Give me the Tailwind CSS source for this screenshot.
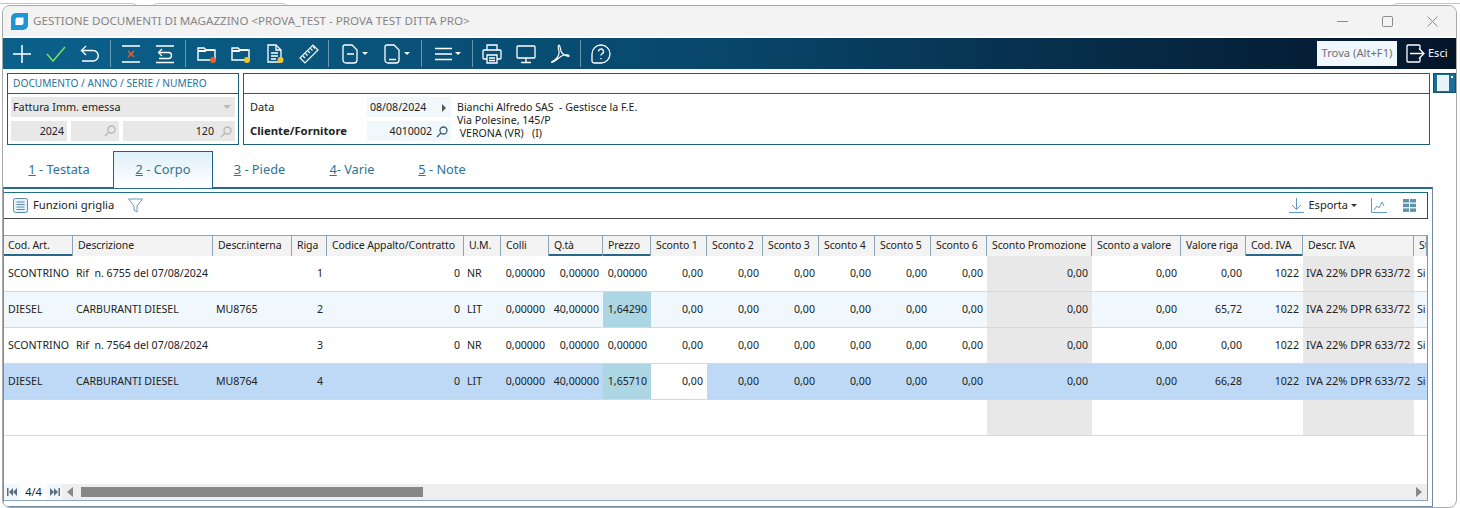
<!doctype html>
<html lang="it">
<head>
<meta charset="utf-8">
<title>Gestione documenti di magazzino</title>
<script src="https://cdn.jsdelivr.net/npm/@tailwindcss/browser@4"></script>
</head>
<body class="bg-white overflow-hidden font-['Noto_Sans','DejaVu_Sans',sans-serif] text-[10.6px] text-[#222]">
<div class="relative w-[1460px] h-[508px] overflow-hidden pt-[5px] pl-[2px]">
<div class="absolute left-0 top-[3px] w-[138px] h-[10px] border-t border-r border-[#c4c4c4] rounded-tr-md"></div>
<div class="absolute left-[152px] top-[3px] w-[136px] h-[10px] border-t border-x border-[#c4c4c4] rounded-t-md"></div>
<div class="absolute left-[1392px] top-[3px] w-[68px] h-[10px] border-t border-l border-[#c4c4c4] rounded-tl-md"></div>
<div class="relative w-[1455px] h-[503px] border border-[#a8a8a8] rounded-t-lg rounded-b-lg bg-white overflow-hidden">
  <!-- title bar -->
  <div class="h-[30px] bg-[#f3f3f3] flex items-center pl-[8px]">
    <svg width="17" height="17" viewBox="0 0 17 17" class="mr-[5px]"><path d="M5 0h12v12a5 5 0 0 1-5 5H0V5a5 5 0 0 1 5-5z" fill="#1d96d3"/><path d="M6.500 4.500h6v5.500a2 2 0 0 1-2 2h-6V6.500a2 2 0 0 1 2-2z" fill="#fff"/></svg>
    <span class="text-[11.6px] text-[#858585] whitespace-nowrap">GESTIONE DOCUMENTI DI MAGAZZINO &lt;PROVA_TEST - PROVA TEST DITTA PRO&gt;</span>
    <div class="ml-auto flex items-center">
      <svg width="11" height="11" viewBox="0 0 11 11" class="mr-[34px]"><path d="M0 5.500h11" stroke="#8a8a8a"/></svg>
      <svg width="11" height="11" viewBox="0 0 11 11" class="mr-[34px]"><rect x=".5" y=".5" width="10" height="10" rx="1" fill="none" stroke="#8a8a8a"/></svg>
      <svg width="11" height="11" viewBox="0 0 11 11" class="mr-[18px]"><path d="M.5.500l10 10M10.500.500l-10 10" stroke="#8a8a8a"/></svg>
    </div>
  </div>
  <!-- toolbar -->
  <div class="mt-[2px] h-[31px] bg-gradient-to-r from-[#0b618b] via-[#08466a] to-[#04152a] flex items-center pl-[2px] text-white">
    <div class="w-[34px] flex justify-center"><svg width="20" height="20" viewBox="0 0 20 20"><path d="M10 1v18M1 10h18" stroke="#fff" stroke-width="1.500"/></svg></div>
    <div class="w-[34px] flex justify-center"><svg width="20" height="20" viewBox="0 0 20 20"><path d="M1 10l6 7L19 3" stroke="#7ed957" stroke-width="1.600" fill="none"/></svg></div>
    <div class="w-[34px] flex justify-center"><svg width="20" height="20" viewBox="0 0 20 20" fill="none" stroke="#fff" stroke-width="1.400"><path d="M6 2L1.500 6.500 6 11"/><path d="M2 6.500h11a5 5 0 0 1 0 10.500H2"/></svg></div>
    <div class="w-px h-[27px] bg-white/40 mx-[3px]"></div>
    <div class="w-[34px] flex justify-center"><svg width="20" height="20" viewBox="0 0 20 20"><path d="M1 2h18M1 18h18" stroke="#fff" stroke-width="1.300"/><path d="M7 7l6 6M13 7l-6 6" stroke="#e8622a" stroke-width="1.500"/></svg></div>
    <div class="w-[34px] flex justify-center"><svg width="20" height="20" viewBox="0 0 20 20" fill="none" stroke="#fff" stroke-width="1.300"><path d="M1 2h18M1 18.500h18"/><path d="M7 5L3.500 8.500 7 12"/><path d="M4 8.500h9.500a3 3 0 0 1 0 6H4"/></svg></div>
    <div class="w-px h-[27px] bg-white/40 mx-[3px]"></div>
    <div class="w-[34px] flex justify-center ml-[1px]"><svg width="20" height="20" viewBox="0 0 20 20"><path d="M1 4h6l2 2h9v10H1z" fill="none" stroke="#fff" stroke-width="1.400"/><path d="M1 7h7l1.500-1H17" stroke="#fff" stroke-width="2" fill="none"/><circle cx="16" cy="16" r="3" fill="#e8622a"/></svg></div>
    <div class="w-[34px] flex justify-center"><svg width="20" height="20" viewBox="0 0 20 20"><path d="M1 4h6l2 2h9v10H1z" fill="none" stroke="#fff" stroke-width="1.400"/><path d="M1 7h7l1.500-1H17" stroke="#fff" stroke-width="2" fill="none"/><circle cx="16" cy="16" r="3" fill="#f4c430"/></svg></div>
    <div class="w-[34px] flex justify-center"><svg width="20" height="20" viewBox="0 0 20 20" fill="none" stroke="#fff" stroke-width="1.300"><path d="M3 1h8l5 5v12H3z"/><path d="M11 1v5h5M6 9h7M6 12h7M6 15h5"/><circle cx="15.500" cy="16" r="3" fill="#f4c430" stroke="none"/></svg></div>
    <div class="w-[34px] flex justify-center"><svg width="20" height="20" viewBox="0 0 20 20" fill="none" stroke="#fff" stroke-width="1.200"><path d="M1 14L14 1l5 5L6 19z"/><path d="M4 12l2 2M6.500 9.500l2 2M9 7l2 2M11.500 4.500l2 2M14 2.500l2 2"/></svg></div>
    <div class="w-px h-[27px] bg-white/40 ml-[2px] mr-[3px]"></div>
    <div class="w-[26px] flex items-center ml-[10px] gap-[3px]"><svg width="17" height="20" viewBox="0 0 17 20" fill="none" stroke="#fff" stroke-width="1.300"><path d="M3 1h7l5 5v10a3 3 0 0 1-3 3H4a3 3 0 0 1-3-3V3a2 2 0 0 1 2-2z"/><path d="M5 10h7"/></svg><span class="w-0 h-0 border-x-[3px] border-x-transparent border-t-[3px] border-t-white"></span></div>
    <div class="w-[26px] flex items-center ml-[16px] gap-[3px]"><svg width="17" height="20" viewBox="0 0 17 20" fill="none" stroke="#fff" stroke-width="1.300"><path d="M3 1h7l5 5v10a3 3 0 0 1-3 3H4a3 3 0 0 1-3-3V3a2 2 0 0 1 2-2z"/><path d="M5 15.500h7"/></svg><span class="w-0 h-0 border-x-[3px] border-x-transparent border-t-[3px] border-t-white"></span></div>
    <div class="w-px h-[27px] bg-white/40 ml-[11px]"></div>
    <div class="w-[26px] flex items-center ml-[13px] gap-[3px]"><svg width="17" height="14" viewBox="0 0 17 14" stroke="#fff" stroke-width="1.300"><path d="M0 1.500h17M0 7h17M0 12.500h17"/></svg><span class="w-0 h-0 border-x-[3px] border-x-transparent border-t-[3px] border-t-white"></span></div>
    <div class="w-px h-[27px] bg-white/40 ml-[11px]"></div>
    <div class="w-[34px] flex justify-center ml-[2px]"><svg width="20" height="20" viewBox="0 0 20 20" fill="none" stroke="#fff" stroke-width="1.300"><path d="M5 6V1h10v5"/><path d="M5 15H2a1 1 0 0 1-1-1V7a1 1 0 0 1 1-1h16a1 1 0 0 1 1 1v7a1 1 0 0 1-1 1h-3"/><path d="M5 11h10v8H5zM7 14h6M7 16.500h6"/></svg></div>
    <div class="w-[34px] flex justify-center"><svg width="20" height="20" viewBox="0 0 20 20" fill="none" stroke="#fff" stroke-width="1.300"><rect x="1" y="2" width="18" height="12" rx="1"/><path d="M10 14v4M5 18.500h10"/></svg></div>
    <div class="w-[34px] flex justify-center"><svg width="20" height="20" viewBox="0 0 20 20" fill="none" stroke="#fff" stroke-width="1.200"><path d="M9 1c-1 0-1 3 0 6 1 4-3 9-6 10-2 1-2 2 0 1 3-1 7-6 11-7 2-.500 5 0 5 1s-4 0-7-3C10 7 10.500 1 9 1z"/></svg></div>
    <div class="w-px h-[27px] bg-white/40 ml-[3px]"></div>
    <div class="w-[34px] flex justify-center ml-[3px]"><svg width="20" height="20" viewBox="0 0 20 20" fill="none" stroke="#fff" stroke-width="1.300"><path d="M1 10a9 9 0 1 1 9 9H3a2 2 0 0 1-2-2z"/><path d="M7.500 7.500a2.500 2.500 0 1 1 3.500 2.300c-.7.4-1 .8-1 1.700"/><path d="M10 14v1.200"/></svg></div>
    <div class="ml-auto w-[80px] h-[25px] bg-[#f0f8fd] text-[#6f6f7a] text-[11.2px] flex items-center justify-center whitespace-nowrap">Trova (Alt+F1)</div>
    <svg width="19" height="19" viewBox="0 0 19 19" fill="none" stroke="#fff" stroke-width="1.300" class="ml-[9px]"><path d="M14 5V2a1 1 0 0 0-1-1H2a1 1 0 0 0-1 1v15a1 1 0 0 0 1 1h11a1 1 0 0 0 1-1v-3"/><path d="M4 9.500h14M13 4.500l5 5-5 5"/></svg>
    <span class="ml-[3px] mr-[7px] w-[21px] text-[11px]">Esci</span>
  </div>
  <!-- document header -->
  <div class="flex mt-[4px] pl-[4px] h-[72px]">
    <div class="w-[232px] border border-[#1b6078] flex flex-col">
      <div class="h-[20px] border-b border-[#1b6078] text-[#26739b] text-[10.2px] pl-[5px] flex items-center whitespace-nowrap">DOCUMENTO / ANNO / SERIE / NUMERO</div>
      <div class="mx-[3px] mt-[3px] h-[20px] bg-[#e8e8e8] flex items-center pl-[2px] pr-[4px] justify-between"><span class="text-[10.8px]">Fattura Imm. emessa</span><span class="w-0 h-0 border-x-[4px] border-x-transparent border-t-[4px] border-t-[#bbb]"></span></div>
      <div class="mx-[3px] mt-[4px] flex gap-[4px] h-[20px]">
        <div class="w-[56px] bg-[#e8e8e8] flex items-center justify-end pr-[3px] pt-[1px]">2024</div>
        <div class="w-[48px] bg-[#e8e8e8] flex items-center justify-end pr-[3px]"><svg width="12" height="12" viewBox="0 0 12 12" fill="none" stroke="#b5b5b5" stroke-width="1.300"><circle cx="7.500" cy="4.500" r="3.500"/><path d="M5 7l-4 4"/></svg></div>
        <div class="w-[112px] bg-[#e8e8e8] flex items-center justify-end pr-[3px] gap-[6px] pt-[1px]"><span>120</span><svg width="12" height="12" viewBox="0 0 12 12" fill="none" stroke="#b5b5b5" stroke-width="1.300"><circle cx="7.500" cy="4.500" r="3.500"/><path d="M5 7l-4 4"/></svg></div>
      </div>
    </div>
    <div class="ml-[4px] w-[1187px] border border-[#1b6078] flex flex-col">
      <div class="h-[20px] border-b border-[#1b6078]"></div>
      <div class="flex pl-[6px] pt-[3px]">
        <div class="w-[117px] flex flex-col">
          <div class="h-[20px] flex items-center text-[11px] pt-[1px]">Data</div>
          <div class="h-[20px] mt-[4px] flex items-center font-bold text-[11.3px] pt-[1px]">Cliente/Fornitore</div>
        </div>
        <div class="w-[84px] flex flex-col">
          <div class="h-[20px] bg-[#f0f8fc] flex items-center pl-[3px] pr-[5px] justify-between pt-[1px]"><span>08/08/2024</span><span class="w-0 h-0 border-y-[4px] border-y-transparent border-l-[4px] border-l-[#555]"></span></div>
          <div class="h-[20px] mt-[4px] bg-[#f0f8fc] flex items-center justify-end pr-[3px] gap-[4px] pt-[1px]"><span>4010002</span><svg width="12" height="12" viewBox="0 0 12 12" fill="none" stroke="#3a5f78" stroke-width="1.300"><circle cx="7.500" cy="4.500" r="3.500"/><path d="M5 7l-4 4"/></svg></div>
        </div>
        <div class="ml-[6px] leading-[13px] pt-[4px] whitespace-pre"><div>Bianchi Alfredo SAS  - Gestisce la F.E.</div><div>Via Polesine, 145/P</div><div> VERONA (VR)   (I)</div></div>
      </div>
    </div>
    <div class="ml-[3px] w-[23px] h-[20px] bg-[#1b6f96] border border-[#12506e] flex items-center pl-[3px] gap-[2px]"><div class="w-[12px] h-[16px] bg-[#e8f3f9]"></div><div class="w-[2px] h-[2px] bg-white self-start mt-[2px]"></div></div>
  </div>
  <!-- tabs -->
  <div class="flex mt-[6px] h-[37px] items-stretch text-[12.8px] text-[#2f7396] pl-[2px] relative z-10">
    <div class="w-[108px] flex items-center justify-center pt-[1px] whitespace-nowrap"><span><u>1</u> - Testata</span></div>
    <div class="w-[100px] bg-gradient-to-b from-[#dff0f9] to-white border border-b-0 border-[#1b6485] flex items-center justify-center pb-[1px] whitespace-nowrap"><span><u>2</u> - Corpo</span></div>
    <div class="w-[93px] flex items-center justify-center pt-[1px] whitespace-nowrap"><span><u>3</u> - Piede</span></div>
    <div class="w-[92px] flex items-center justify-center pt-[1px] whitespace-nowrap"><span><u>4</u>- Varie</span></div>
    <div class="w-[88px] flex items-center justify-center pt-[1px] whitespace-nowrap"><span><u>5</u> - Note</span></div>
  </div>
  <!-- body panel -->
  <div class="w-[1430px] h-[320px] border-t-2 border-t-[#2a6a8a] border-l border-l-[#7a8f9f] border-r border-r-[#6f8ba0] border-b border-b-[#6f8ba0] -mt-[1px] flex flex-col">
    <div class="w-[1424px] h-[27px] mt-[3px] border-t border-t-[#1f6f85] border-b border-b-[#444] border-r border-r-[#444] flex items-center pl-[9px] shrink-0">
      <svg width="15" height="15" viewBox="0 0 15 15" class="mr-[5px]" fill="#e6f2f9" stroke="#5f8aa5"><rect x=".5" y=".5" width="14" height="14" rx="2"/><path d="M3.500 4h8M3.500 6.500h8M3.500 9h8M3.500 11.500h8"/></svg>
      <span class="text-[11.3px]">Funzioni griglia</span>
      <svg width="15" height="16" viewBox="0 0 15 16" class="ml-[14px]" fill="none" stroke="#6a9ab5"><path d="M.5 1h14L9 8v6l-3-2V8z"/></svg>
      <svg width="15" height="15" viewBox="0 0 15 15" class="ml-auto" fill="none" stroke="#5f9ac0"><path d="M7.500 0v11M3 7l4.500 4.500L12 7M0 14.500h15"/></svg>
      <span class="ml-[5px] text-[11px]">Esporta</span>
      <span class="ml-[3px] w-0 h-0 border-x-[3px] border-x-transparent border-t-[3px] border-t-[#333]"></span>
      <svg width="16" height="15" viewBox="0 0 16 15" class="ml-[14px]" fill="none" stroke="#5f9ac0"><path d="M.5 0v14.500H16M3 12l3-4 2 2 3-6 2 4"/></svg>
      <svg width="13" height="13" viewBox="0 0 13 13" class="ml-[16px] mr-[11px]" fill="#5f93ad"><rect width="6" height="3.500"/><rect x="7" width="6" height="3.500"/><rect y="4.700" width="6" height="3.500"/><rect x="7" y="4.700" width="6" height="3.500"/><rect y="9.400" width="6" height="3.500"/><rect x="7" y="9.400" width="6" height="3.500"/></svg>
    </div>
    <div class="h-[16px] shrink-0"></div>
    <div class="w-[1424px] border-r border-r-[#7a99b0] h-[266px] shrink-0 flex flex-col">
    <!-- grid -->
    <div class="w-[1423px] overflow-hidden flex flex-col h-[249px] shrink-0">
      <!-- header -->
      <div class="grid grid-cols-[69px_140px_79px_35px_137px_37px_48px_54px_48px_56px_56px_56px_56px_56px_56px_105px_89px_65px_57px_111px_13px] h-[21px] bg-[#f3f3f3] border-t border-[#8ba4b8] text-[10.5px] tracking-[-0.1px] [&>div]:border-r [&>div]:border-[#8ba4b8] [&>div]:pl-[5px] [&>div]:flex [&>div]:items-center [&>div]:whitespace-nowrap [&>div]:overflow-hidden">
        <div class="shadow-[inset_0_-2px_0_#27688a] !pl-[4px]">Cod. Art.</div><div>Descrizione</div><div>Descr.interna</div><div>Riga</div><div>Codice Appalto/Contratto</div><div>U.M.</div><div>Colli</div><div class="shadow-[inset_0_-2px_0_#27688a]">Q.tà</div><div class="shadow-[inset_0_-2px_0_#27688a]">Prezzo</div><div>Sconto 1</div><div>Sconto 2</div><div>Sconto 3</div><div>Sconto 4</div><div>Sconto 5</div><div>Sconto 6</div><div>Sconto Promozione</div><div>Sconto a valore</div><div>Valore riga</div><div class="shadow-[inset_0_-2px_0_#27688a]">Cod. IVA</div><div>Descr. IVA</div><div>St</div>
      </div>
      <!-- row 1 -->
      <div class="grid grid-cols-[69px_140px_79px_35px_137px_37px_48px_54px_48px_56px_56px_56px_56px_56px_56px_105px_89px_65px_57px_111px_13px] h-[36px] bg-white border-b border-[#d8d8d8] [&>div]:flex [&>div]:items-center [&>div]:justify-end [&>div]:pr-[4px] [&>div]:whitespace-nowrap [&>div]:overflow-hidden">
        <div class="!justify-start !pr-0 pl-[4px]">SCONTRINO</div><div class="!justify-start !pr-0 pl-[3px]">Rif&nbsp; n. 6755 del 07/08/2024</div><div></div><div>1</div><div>0</div><div class="!justify-start !pr-0 pl-[3px]">NR</div><div>0,00000</div><div>0,00000</div><div>0,00000</div><div>0,00</div><div>0,00</div><div>0,00</div><div>0,00</div><div>0,00</div><div>0,00</div><div class="bg-[#e8e8e8]">0,00</div><div>0,00</div><div>0,00</div><div>1022</div><div class="bg-[#e8e8e8] !justify-start !pr-0 pl-[3px] text-[11px]">IVA 22% DPR 633/72</div><div class="!justify-start !pr-0 pl-[3px]">Si</div>
      </div>
      <!-- row 2 -->
      <div class="grid grid-cols-[69px_140px_79px_35px_137px_37px_48px_54px_48px_56px_56px_56px_56px_56px_56px_105px_89px_65px_57px_111px_13px] h-[36px] bg-[#f0f8fd] border-b border-[#d8d8d8] [&>div]:flex [&>div]:items-center [&>div]:justify-end [&>div]:pr-[4px] [&>div]:whitespace-nowrap [&>div]:overflow-hidden">
        <div class="!justify-start !pr-0 pl-[4px]">DIESEL</div><div class="!justify-start !pr-0 pl-[3px]">CARBURANTI DIESEL</div><div class="!justify-start !pr-0 pl-[3px]">MU8765</div><div>2</div><div>0</div><div class="!justify-start !pr-0 pl-[3px]">LIT</div><div>0,00000</div><div>40,00000</div><div class="bg-[#acd6e4]">1,64290</div><div>0,00</div><div>0,00</div><div>0,00</div><div>0,00</div><div>0,00</div><div>0,00</div><div class="bg-[#e8e8e8]">0,00</div><div>0,00</div><div>65,72</div><div>1022</div><div class="bg-[#e8e8e8] !justify-start !pr-0 pl-[3px] text-[11px]">IVA 22% DPR 633/72</div><div class="!justify-start !pr-0 pl-[3px]">Si</div>
      </div>
      <!-- row 3 -->
      <div class="grid grid-cols-[69px_140px_79px_35px_137px_37px_48px_54px_48px_56px_56px_56px_56px_56px_56px_105px_89px_65px_57px_111px_13px] h-[36px] bg-white border-b border-[#d8d8d8] [&>div]:flex [&>div]:items-center [&>div]:justify-end [&>div]:pr-[4px] [&>div]:whitespace-nowrap [&>div]:overflow-hidden">
        <div class="!justify-start !pr-0 pl-[4px]">SCONTRINO</div><div class="!justify-start !pr-0 pl-[3px]">Rif&nbsp; n. 7564 del 07/08/2024</div><div></div><div>3</div><div>0</div><div class="!justify-start !pr-0 pl-[3px]">NR</div><div>0,00000</div><div>0,00000</div><div>0,00000</div><div>0,00</div><div>0,00</div><div>0,00</div><div>0,00</div><div>0,00</div><div>0,00</div><div class="bg-[#e8e8e8]">0,00</div><div>0,00</div><div>0,00</div><div>1022</div><div class="bg-[#e8e8e8] !justify-start !pr-0 pl-[3px] text-[11px]">IVA 22% DPR 633/72</div><div class="!justify-start !pr-0 pl-[3px]">Si</div>
      </div>
      <!-- row 4 selected -->
      <div class="grid grid-cols-[69px_140px_79px_35px_137px_37px_48px_54px_48px_56px_56px_56px_56px_56px_56px_105px_89px_65px_57px_111px_13px] h-[36px] bg-[#bdd9f6] border-b border-[#d8d8d8] [&>div]:flex [&>div]:items-center [&>div]:justify-end [&>div]:pr-[4px] [&>div]:whitespace-nowrap [&>div]:overflow-hidden">
        <div class="!justify-start !pr-0 pl-[4px]">DIESEL</div><div class="!justify-start !pr-0 pl-[3px]">CARBURANTI DIESEL</div><div class="!justify-start !pr-0 pl-[3px]">MU8764</div><div>4</div><div>0</div><div class="!justify-start !pr-0 pl-[3px]">LIT</div><div>0,00000</div><div>40,00000</div><div class="bg-[#acd6e4]">1,65710</div><div class="bg-white">0,00</div><div>0,00</div><div>0,00</div><div>0,00</div><div>0,00</div><div>0,00</div><div>0,00</div><div>0,00</div><div>66,28</div><div>1022</div><div class="!justify-start !pr-0 pl-[3px] text-[11px]">IVA 22% DPR 633/72</div><div class="!justify-start !pr-0 pl-[3px]">Si</div>
      </div>
      <!-- empty row -->
      <div class="grid grid-cols-[69px_140px_79px_35px_137px_37px_48px_54px_48px_56px_56px_56px_56px_56px_56px_105px_89px_65px_57px_111px_13px] h-[36px] bg-white border-b border-[#d8d8d8]">
        <div></div><div></div><div></div><div></div><div></div><div></div><div></div><div></div><div></div><div></div><div></div><div></div><div></div><div></div><div></div><div class="bg-[#e8e8e8]"></div><div></div><div></div><div></div><div class="bg-[#e8e8e8]"></div><div></div>
      </div>
      <div class="flex-1"></div>
    </div>
    <!-- pager / scrollbar -->
    <div class="w-[1423px] h-[17px] bg-[#eeeeee] flex items-center border-b border-[#8ba4b8] shrink-0">
      <div class="w-[16px] h-[16px] bg-[#f0f8fd] flex items-center justify-center"><svg width="10" height="8" viewBox="0 0 10 8" fill="#5a6e7e"><path d="M0 0h1.500v8H0zM6 0v8L2 4zM10 0v8L6 4z"/></svg></div>
      <div class="w-[27px] h-[16px] bg-white flex items-center justify-center text-[11px]">4/4</div>
      <div class="w-[15px] h-[16px] bg-[#f0f8fd] flex items-center justify-center"><svg width="10" height="8" viewBox="0 0 10 8" fill="#5a6e7e"><path d="M10 0H8.500v8H10zM4 0v8l4-4zM0 0v8l4-4z"/></svg></div>
      <svg width="6" height="10" viewBox="0 0 6 10" fill="#888" class="ml-[5px]"><path d="M6 0v10L0 5z"/></svg>
      <div class="ml-[8px] w-[342px] h-[10px] bg-[#868686]"></div>
      <svg width="6" height="10" viewBox="0 0 6 10" fill="#888" class="ml-auto mr-[5px]"><path d="M0 0v10l6-5z"/></svg>
    </div>
    </div>
  </div>
</div>
</div>
</body>
</html>
